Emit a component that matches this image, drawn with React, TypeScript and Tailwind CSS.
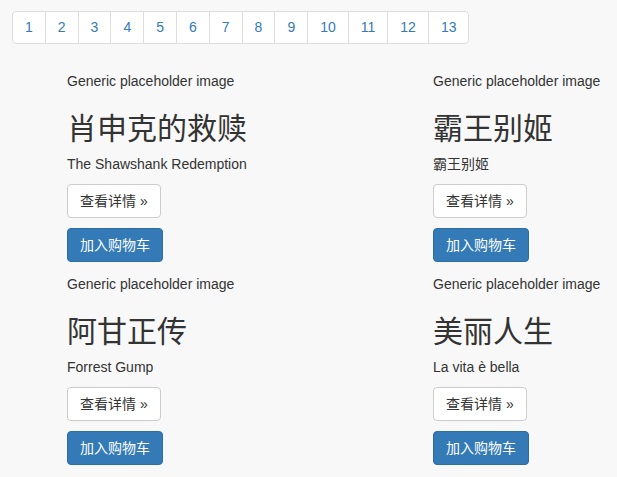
const pages = [1, 2, 3, 4, 5, 6, 7, 8, 9, 10, 11, 12, 13];

const movies = [
  { title: "肖申克的救赎", sub: "The Shawshank Redemption" },
  { title: "霸王别姬", sub: "霸王别姬" },
  { title: "阿甘正传", sub: "Forrest Gump" },
  { title: "美丽人生", sub: "La vita è bella" },
];

function MovieCard({ title, sub }: { title: string; sub: string }) {
  return (
    <div className="flex flex-col items-start">
      <span className="text-[14px] leading-[20px]">Generic placeholder image</span>
      <h2 className="mt-[21px] mb-[9px] text-[30px] leading-[33px] font-normal">{title}</h2>
      <p className="mb-[10px] text-[14px] leading-[20px]">{sub}</p>
      <button className="h-[34px] rounded-[4px] border border-[#ccc] bg-white px-3 text-[14px] text-[#333]">
        查看详情 »
      </button>
      <button className="mt-[10px] h-[34px] rounded-[4px] border border-[#2e6da4] bg-[#337ab7] px-3 text-[14px] text-white">
        加入购物车
      </button>
    </div>
  );
}

export default function App() {
  return (
    <div
      className="min-h-[477px] bg-[#f8f8f8] text-[#333]"
      style={{ fontFamily: '"Liberation Sans", Arial, "Noto Sans CJK SC", sans-serif' }}
    >
      <div className="pl-3 pt-[11px]">
        <ul className="inline-flex rounded-[4px] bg-white">
          {pages.map((p, i) => (
            <li
              key={p}
              className={`h-[33px] border border-[#ddd] px-3 text-[14px] leading-[31px] text-[#337ab7] ${
                i === 0 ? "rounded-l-[4px]" : "-ml-px"
              } ${i === pages.length - 1 ? "rounded-r-[4px]" : ""}`}
            >
              {p}
            </li>
          ))}
        </ul>
      </div>
      <div className="grid grid-cols-[366px_1fr] gap-y-[12px] pl-[67px] pt-[27px]">
        {movies.map((m) => (
          <MovieCard key={m.title} title={m.title} sub={m.sub} />
        ))}
      </div>
    </div>
  );
}
